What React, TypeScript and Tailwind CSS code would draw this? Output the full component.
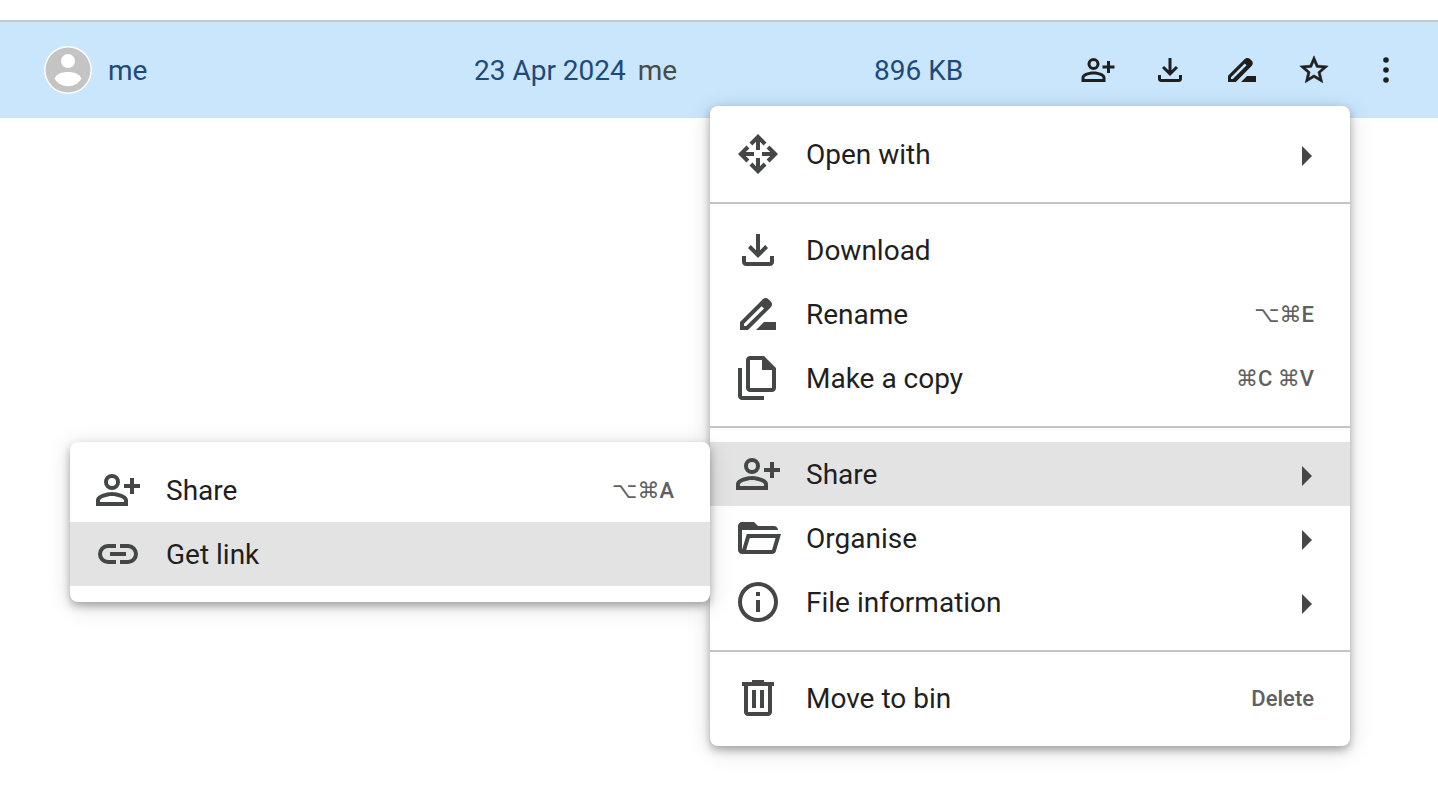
import type { ReactNode } from "react";

type IconProps = { className?: string };

type MenuEntry = {
  id: string;
  label: string;
  icon: ReactNode;
  shortcut?: ReactNode;
  active?: boolean;
  children?: MenuEntry[];
};

// 24px grid icons, used inside the menus
function MenuIcon({ d }: { d: string }) {
  return (
    <svg viewBox="0 0 24 24" className="size-12 shrink-0 fill-[#444746]" fillRule="evenodd" aria-hidden="true">
      <path d={d} />
    </svg>
  );
}

// 20px grid icons, used in the file row
function RowIcon({ d }: { d: string }) {
  return (
    <svg viewBox="0 0 20 20" className="size-10 fill-[#1f1f1f]" fillRule="evenodd" aria-hidden="true">
      <path d={d} />
    </svg>
  );
}

const paths = {
  openWith:
    "M12 22 7.75 17.75 9.2 16.3l1.8 1.8V14h2v4.1l1.8-1.8 1.45 1.45ZM6.25 16.25 2 12l4.25-4.25L7.7 9.2 5.9 11H10v2H5.9l1.8 1.8ZM17.75 16.25 16.3 14.8l1.8-1.8H14v-2h4.1l-1.8-1.8 1.45-1.45L22 12ZM11 10V5.9L9.2 7.7 7.75 6.25 12 2l4.25 4.25L14.8 7.7 13 5.9V10Z",
  download:
    "M12 16 7 11l1.4-1.45 2.6 2.6V4h2v8.15l2.6-2.6L17 11ZM6 20q-.825 0-1.412-.587Q4 18.825 4 18v-3h2v3h12v-3h2v3q0 .825-.587 1.413Q18.825 20 18 20Z",
  rename:
    "M3 20v-4L14.4 4.6q.6-.6 1.4-.6t1.4.6l1.2 1.2q.6.6.6 1.4t-.6 1.4L7 20ZM5 18h1.1L15 9.3l-1.2-1.2L5 16.9ZM11 20l4-4h6v4Z",
  copy:
    "M8 19q-.825 0-1.412-.587Q6 17.825 6 17V3q0-.825.588-1.412Q7.175 1 8 1h7l6 6v10q0 .825-.587 1.413Q19.825 19 19 19ZM14 8V3H8v14h11V8ZM4 23q-.825 0-1.412-.587Q2 21.825 2 21V7h2v14h11v2Z",
  personAdd:
    "M9 12a4 4 0 1 1 0-8 4 4 0 0 1 0 8ZM9 10a2 2 0 1 0 0-4 2 2 0 0 0 0 4ZM9 13c-2.67 0-8 1.34-8 4v3h16v-3c0-2.66-5.33-4-8-4ZM15 18H3v-.99C3.2 16.29 6.3 15 9 15s5.8 1.29 6 2ZM20 9V6h-2v3h-3v2h3v3h2v-3h3V9Z",
  folder:
    "M4 20q-.825 0-1.412-.587Q2 18.825 2 18V6q0-.825.588-1.412Q3.175 4 4 4h6l2 2h8q.825 0 1.413.588Q22 7.175 22 8H4v10l2.4-8h17.1l-2.575 8.575q-.2.65-.737 1.038Q19.65 20 19 20ZM6.1 18H19l1.8-6H7.9Z",
  info:
    "M11 17h2v-6h-2ZM11 9h2V7h-2ZM12 22a10 10 0 1 1 0-20 10 10 0 0 1 0 20ZM12 20a8 8 0 1 0 0-16 8 8 0 0 0 0 16Z",
  bin:
    "M7 21q-.825 0-1.412-.587Q5 19.825 5 19V6H4V4h5V3h6v1h5v2h-1v13q0 .825-.587 1.413Q17.825 21 17 21ZM17 6H7v13h10ZM9 17h2V8H9ZM13 17h2V8h-2Z",
  link:
    "M11 17H7a5 5 0 0 1 0-10h4v2H7a3 3 0 0 0 0 6h4ZM8 13v-2h8v2ZM13 17v-2h4a3 3 0 0 0 0-6h-4V7h4a5 5 0 0 1 0 10Z",
  rowPersonAdd:
    "M7.75 10a3 3 0 1 1 0-6 3 3 0 0 1 0 6ZM7.75 8.5a1.5 1.5 0 1 0 0-3 1.5 1.5 0 0 0 0 3ZM1.75 16v-2.1c0-2.1 3.2-3.15 6-3.15s6 1.05 6 3.15V16ZM3.25 14.5h9v-.6c0-.9-2.4-1.65-4.5-1.65s-4.5.75-4.5 1.65ZM14.5 11.5V9.25h-2.25v-1.5h2.25V5.5H16v2.25h2.25v1.5H16v2.25Z",
  rowDownload:
    "M10 13 6 9l1.062-1.062L9.25 10.125V4h1.5v6.125l2.188-2.187L14 9ZM5.5 16q-.619 0-1.06-.44Q4 15.119 4 14.5V12.5h1.5v2h9v-2H16v2q0 .619-.44 1.06-.44.44-1.06.44Z",
  rowRename:
    "M3 16v-3.1l8.4-8.4q.5-.5 1.3-.5t1.3.5l.9.9q.5.5.5 1.2t-.5 1.3L6.9 16ZM4.5 14.5h.9l6.900-6.900-.9-.9-6.900 6.900ZM9.500 16l3-3H17v3Z",
  star:
    "M22 9.24l-7.19-.62L12 2 9.19 8.63 2 9.24l5.46 4.73L5.82 21 12 17.27 18.18 21l-1.63-7.03ZM12 15.4l-3.76 2.27 1-4.28-3.32-2.88 4.38-.38L12 6.1l1.71 4.04 4.38.38-3.32 2.88 1 4.28Z",
};

function StarIcon() {
  return (
    <svg viewBox="0 0 24 24" className="size-[34px] fill-[#1f1f1f] stroke-[#1f1f1f] stroke-[0.4]" fillRule="evenodd" aria-hidden="true">
      <path d={paths.star} />
    </svg>
  );
}

function MoreIcon() {
  return (
    <svg viewBox="0 0 20 20" className="size-10 fill-[#1f1f1f]" aria-hidden="true">
      <circle cx="10" cy="5" r="1.4" />
      <circle cx="10" cy="10" r="1.4" />
      <circle cx="10" cy="15" r="1.4" />
    </svg>
  );
}

function Avatar({ className }: IconProps) {
  return (
    <svg viewBox="0 0 48 48" className={className} aria-hidden="true">
      <circle cx="24" cy="24" r="24" fill="#fff" />
      <circle cx="24" cy="24" r="22.5" fill="#c4c4c4" />
      <circle cx="24" cy="15" r="7" fill="#fff" />
      <path d="M10.500 32.500C12.500 28 18 26 24 26s11.500 2 13.500 6.500C34.500 37.500 29.500 40.200 24 40.200S13.500 37.500 10.500 32.500Z" fill="#fff" />
    </svg>
  );
}

const rowActions = [
  { label: "Share", icon: <RowIcon d={paths.rowPersonAdd} /> },
  { label: "Download", icon: <RowIcon d={paths.rowDownload} /> },
  { label: "Rename", icon: <RowIcon d={paths.rowRename} /> },
  { label: "Add to starred", icon: <StarIcon /> },
  { label: "More actions", icon: <MoreIcon /> },
];

const menuGroups: MenuEntry[][] = [
  [{ id: "open", label: "Open with", icon: <MenuIcon d={paths.openWith} />, children: [] }],
  [
    { id: "download", label: "Download", icon: <MenuIcon d={paths.download} /> },
    { id: "rename", label: "Rename", icon: <MenuIcon d={paths.rename} />, shortcut: "⌥⌘E" },
    { id: "copy", label: "Make a copy", icon: <MenuIcon d={paths.copy} />, shortcut: "⌘C ⌘V" },
  ],
  [
    {
      id: "share",
      label: "Share",
      icon: <MenuIcon d={paths.personAdd} />,
      active: true,
      children: [
        { id: "share-file", label: "Share", icon: <MenuIcon d={paths.personAdd} />, shortcut: "⌥⌘A" },
        { id: "get-link", label: "Get link", icon: <MenuIcon d={paths.link} />, active: true },
      ],
    },
    { id: "organise", label: "Organise", icon: <MenuIcon d={paths.folder} />, children: [] },
    { id: "info", label: "File information", icon: <MenuIcon d={paths.info} />, children: [] },
  ],
  [{ id: "bin", label: "Move to bin", icon: <MenuIcon d={paths.bin} />, shortcut: "Delete" }],
];

const panel =
  "absolute w-160 rounded-lg bg-white shadow-[0_4px_8px_rgba(0,0,0,0.30),0_4px_24px_rgba(0,0,0,0.14)]";

function MenuItem({ item }: { item: MenuEntry }) {
  return (
    <li role="none" className="relative">
      <button
        type="button"
        role="menuitem"
        aria-haspopup={item.children ? "menu" : undefined}
        className={`flex h-16 w-full items-center gap-6 pr-9 pl-6 text-left ${item.active ? "bg-[#e3e3e3]" : ""}`}
      >
        {item.icon}
        <span className="flex-1 pt-0.5 text-[28px] leading-9 text-[#1f1f1f]">{item.label}</span>
        {item.shortcut && (
          <kbd className="pt-0.5 font-[Roboto,'DejaVu_Sans',sans-serif] text-[22px] leading-7 font-medium text-[#5f6060]">
            {item.shortcut}
          </kbd>
        )}
        {item.children && (
          <svg viewBox="0 0 12 24" className="h-6 w-3 fill-[#444746]" aria-hidden="true">
            <path d="M0 4 10 14 0 24Z" />
          </svg>
        )}
      </button>
      {item.children && item.children.length > 0 && (
        <ul role="menu" aria-label={item.label} className={`${panel} top-0 right-full py-4`}>
          {item.children.map((child) => (
            <MenuItem key={child.id} item={child} />
          ))}
        </ul>
      )}
    </li>
  );
}

export default function App() {
  return (
    <main className="min-h-screen bg-white pt-5 font-[Roboto,'DejaVu_Sans',sans-serif]">
      <div className="relative border-t-2 border-[#c4c7c5]">
        <div className="grid h-24 grid-cols-[430fr_400fr_188fr_auto] items-center bg-[#c9e6fc] pr-4 pl-11 text-[28px] leading-9 text-[#1d4a7a]">
          <div className="flex items-center gap-4">
            <Avatar className="size-12" />
            <span className="pt-0.5">me</span>
          </div>
          <div className="flex gap-3 pt-0.5">
            <span>23 Apr 2024</span>
            <span className="text-[#4b4a48]">me</span>
          </div>
          <span className="pt-0.5">896 KB</span>
          <div className="flex">
            {rowActions.map((action) => (
              <button key={action.label} type="button" aria-label={action.label} className="flex size-18 items-center justify-center">
                {action.icon}
              </button>
            ))}
          </div>
        </div>

        <div role="menu" aria-label="File actions" className={`${panel} top-21 right-22 pt-4`}>
          {menuGroups.map((group, idx) => (
            <ul key={group[0].id} role="group" className={idx > 0 ? "border-t-2 border-[#c4c4c4] pt-[14px] pb-4" : "pb-4"}>
              {group.map((item) => (
                <MenuItem key={item.id} item={item} />
              ))}
            </ul>
          ))}
        </div>
      </div>
    </main>
  );
}
